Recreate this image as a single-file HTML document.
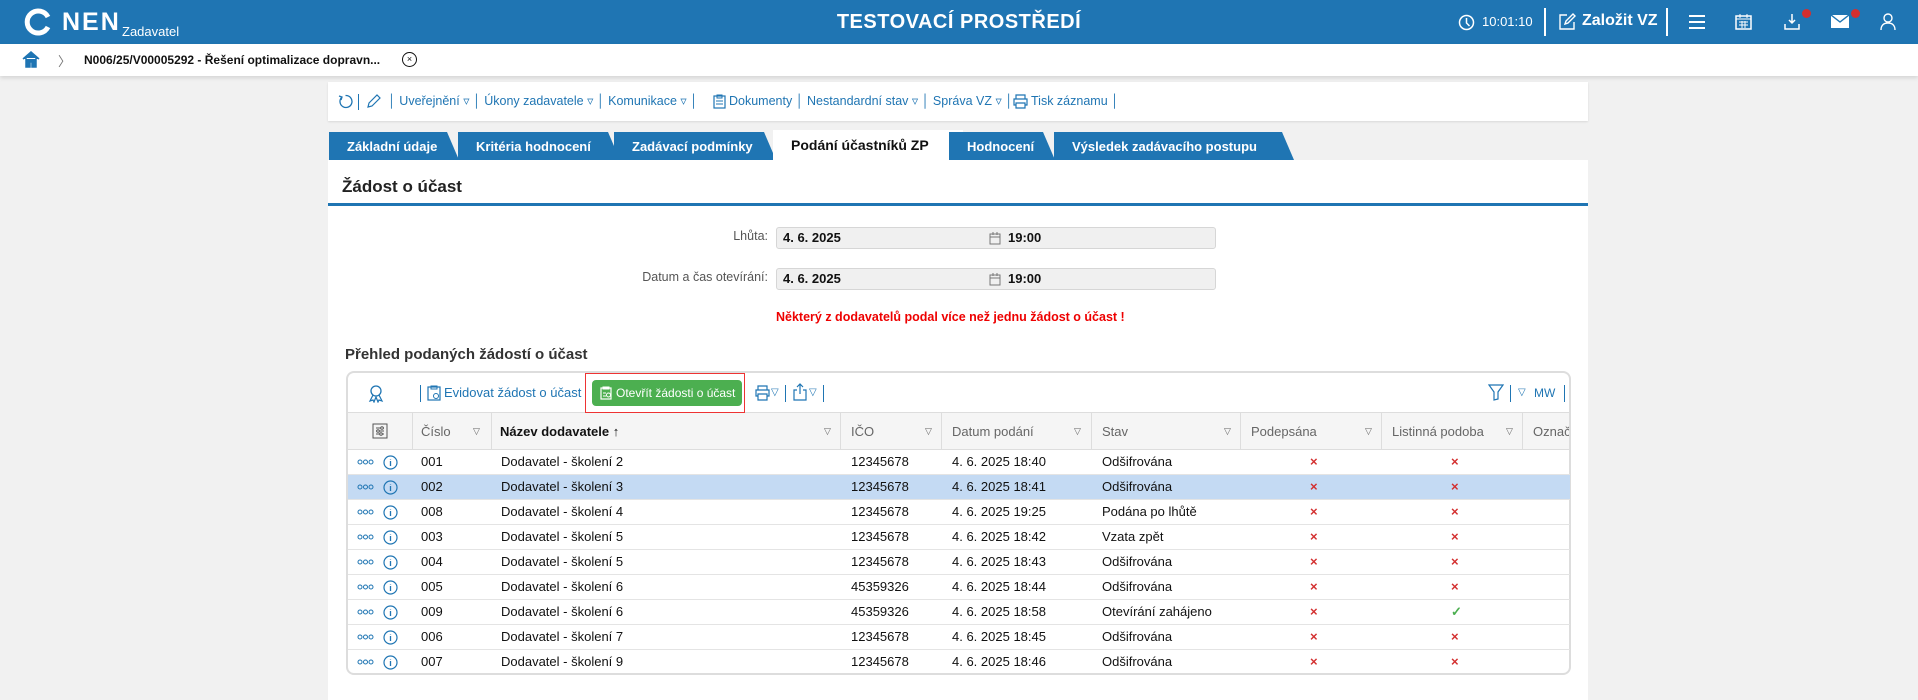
<!DOCTYPE html>
<html><head><meta charset="utf-8"><style>
*{box-sizing:border-box;margin:0;padding:0}
body{width:1918px;height:694px;overflow:hidden;background:#f1f1f1;font-family:"Liberation Sans",sans-serif;font-size:13px;color:#111;position:relative}
.a{position:absolute;white-space:nowrap}
.hdr{left:0;top:0;width:1918px;height:44px;background:#1f75b3;color:#fff}
.bc{left:0;top:44px;width:1918px;height:32px;background:#fff;box-shadow:0 2px 4px rgba(0,0,0,.12)}
.blue{color:#1f75b3}
.tab{top:132px;height:28px;background:#1f75b3;color:#fff;font-weight:bold;font-size:13px;line-height:30px;padding-left:18px;clip-path:polygon(0 0,calc(100% - 12px) 0,100% 100%,0 100%)}
.inp{height:22px;background:#f0f0f0;border:1px solid #d6d6d6;border-radius:3px;font-weight:bold;line-height:20px;padding-left:6px}
.row{left:347px;width:1222px;height:25px;border-bottom:1px solid #e4e4e4;line-height:24px}
.row span{position:absolute}
.x{color:#d32f2f;font-weight:bold}
.th{top:413px;height:37px;line-height:37px;color:#666;border-right:1px solid #ddd}
.cal{position:absolute;left:212px;top:4px}
.tb{color:#1f75b3;font-size:12.5px;top:0;line-height:39px}
.sep{position:absolute;width:1px;background:#1f75b3}
</style></head><body>
<div class="a hdr">
 <svg class="a" style="left:24px;top:8px" width="28" height="28" viewBox="0 0 28 28"><path d="M24 9A11 11 0 1 0 24 19" fill="none" stroke="#fff" stroke-width="5"/></svg>
 <div class="a" style="left:62px;top:8px;font-size:25px;font-weight:bold;letter-spacing:2px">NEN</div>
 <div class="a" style="left:122px;top:24px;font-size:13px">Zadavatel</div>
 <div class="a" style="left:0;width:1918px;text-align:center;top:11px;font-size:20px;font-weight:bold;letter-spacing:.5px">TESTOVACÍ PROSTŘEDÍ</div>
 <svg class="a" style="left:1458px;top:14px" width="17" height="17" viewBox="0 0 17 17"><circle cx="8.5" cy="8.5" r="7" fill="none" stroke="#fff" stroke-width="1.5"/><path d="M8.5 4v5l3 3" fill="none" stroke="#fff" stroke-width="1.5"/></svg>
 <div class="a" style="left:1482px;top:14px;font-size:13px">10:01:10</div>
 <div class="a" style="left:1544px;top:8px;width:2px;height:28px;background:#fff"></div>
 <svg class="a" style="left:1558px;top:13px" width="18" height="18" viewBox="0 0 18 18"><path d="M9 2H2v14h14V9M7 11l1-3 7-7 2 2-7 7z" fill="none" stroke="#fff" stroke-width="1.4"/></svg>
 <div class="a" style="left:1582px;top:12px;font-size:16px;font-weight:bold">Založit VZ</div>
 <div class="a" style="left:1666px;top:8px;width:2px;height:28px;background:#fff"></div>
 <div class="a" style="left:1689px;top:15px;width:16px;height:2px;background:#fff;box-shadow:0 6px 0 #fff,0 12px 0 #fff"></div>
 <svg class="a" style="left:1735px;top:13px" width="17" height="17" viewBox="0 0 17 17"><rect x="1" y="3" width="15" height="13" fill="none" stroke="#fff" stroke-width="1.5"/><path d="M1 6h15M5 1v4M12 1v4M4 9h9M4 12h9M7 8v7M10 8v7" stroke="#fff"/></svg>
 <svg class="a" style="left:1783px;top:13px" width="18" height="18" viewBox="0 0 18 18"><path d="M9 1v9M6 7l3 3 3-3M2 11v5h14v-5" fill="none" stroke="#fff" stroke-width="1.5"/></svg>
 <div class="a" style="left:1802px;top:9px;width:9px;height:9px;border-radius:5px;background:#d32f2f"></div>
 <svg class="a" style="left:1831px;top:15px" width="18" height="13" viewBox="0 0 18 13"><rect width="18" height="13" fill="#fff"/><path d="M0 0l9 7 9-7" fill="none" stroke="#1f75b3" stroke-width="1.4"/></svg>
 <div class="a" style="left:1851px;top:9px;width:9px;height:9px;border-radius:5px;background:#d32f2f"></div>
 <svg class="a" style="left:1880px;top:13px" width="16" height="18" viewBox="0 0 16 18"><circle cx="8" cy="5" r="4" fill="none" stroke="#fff" stroke-width="1.4"/><path d="M1 17c0-5 3-7 7-7s7 2 7 7" fill="none" stroke="#fff" stroke-width="1.4"/></svg>
</div>
<div class="a bc">
 <svg class="a" style="left:22px;top:7px" width="18" height="17" viewBox="0 0 18 17"><path d="M1 8L9 1l8 7M4 7v9h4v-5h2v5h4V7" fill="#1f75b3" stroke="#1f75b3" stroke-width="1.5"/></svg>
 <div class="a" style="left:58px;top:7px;color:#777">〉</div>
 <div class="a" style="left:84px;top:9px;font-weight:bold;font-size:12px">N006/25/V00005292 - Řešení optimalizace dopravn...</div>
 <div class="a" style="left:402px;top:8px;width:15px;height:15px;border:1.5px solid #111;border-radius:50%;font-size:9px;text-align:center;line-height:12px">×</div>
</div>
<div class="a" style="left:328px;top:82px;width:1260px;height:39px;background:#fff;box-shadow:0 1px 2px rgba(0,0,0,.1)">
 <svg class="a" style="left:10px;top:12px" width="15" height="15" viewBox="0 0 15 15"><path d="M4 3A6 6 0 1 0 7.5 1.5M1 2l3 1-1 3" fill="none" stroke="#1f75b3" stroke-width="1.3"/></svg>
 <div class="sep" style="left:30px;top:12px;height:16px"></div>
 <svg class="a" style="left:38px;top:12px" width="15" height="15" viewBox="0 0 15 15"><path d="M2 13l1-4 8-8 3 3-8 8z" fill="none" stroke="#1f75b3" stroke-width="1.2"/></svg>
 <span class="a tb" style="left:60px">│ Uveřejnění ▿ │ Úkony zadavatele ▿ │ Komunikace ▿ │</span>
 <svg class="a" style="left:385px;top:12px" width="13" height="15" viewBox="0 0 13 15"><rect x="1" y="2" width="11" height="12" fill="none" stroke="#1f75b3" stroke-width="1.2"/><path d="M4 1h5v3H4zM3 7h7M3 10h7" fill="none" stroke="#1f75b3"/></svg>
 <span class="a tb" style="left:401px">Dokumenty │ Nestandardní stav ▿ │ Správa VZ ▿ │</span>
 <svg class="a" style="left:685px;top:12px" width="15" height="15" viewBox="0 0 15 15"><path d="M3 5V1h9v4M3 11H1V5h13v6h-2M3 9h9v5H3z" fill="none" stroke="#1f75b3" stroke-width="1.2"/></svg>
 <span class="a tb" style="left:703px">Tisk záznamu │</span>
</div>
<div class="a tab" style="left:329px;width:130px">Základní údaje</div>
<div class="a tab" style="left:458px;width:162px">Kritéria hodnocení</div>
<div class="a tab" style="left:614px;width:162px;padding-left:18px">Zadávací podmínky</div>
<div class="a tab" style="left:773px;width:190px;background:#fff;color:#111;font-size:14px;clip-path:none;top:130px;height:30px">Podání účastníků ZP</div>
<div class="a tab" style="left:949px;width:106px">Hodnocení</div>
<div class="a tab" style="left:1054px;width:240px">Výsledek zadávacího postupu</div>
<div class="a" style="left:328px;top:160px;width:1260px;height:540px;background:#fff"></div>
<div class="a" style="left:342px;top:177px;font-size:17px;font-weight:bold;color:#222">Žádost o účast</div>
<div class="a" style="left:328px;top:203px;width:1260px;height:3px;background:#1f75b3"></div>
<div class="a" style="left:600px;width:168px;text-align:right;top:229px;color:#555;font-size:12.5px">Lhůta:</div>
<div class="a inp" style="left:776px;top:227px;width:440px">4. 6. 2025<svg class="cal" width="12" height="13" viewBox="0 0 12 13"><rect x="1" y="2" width="10" height="10" fill="none" stroke="#777"/><path d="M1 5h10M4 0v3M8 0v3" stroke="#777"/></svg><span class="a" style="left:231px">19:00</span></div>
<div class="a" style="left:600px;width:168px;text-align:right;top:270px;color:#555;font-size:12.5px">Datum a čas otevírání:</div>
<div class="a inp" style="left:776px;top:268px;width:440px">4. 6. 2025<svg class="cal" width="12" height="13" viewBox="0 0 12 13"><rect x="1" y="2" width="10" height="10" fill="none" stroke="#777"/><path d="M1 5h10M4 0v3M8 0v3" stroke="#777"/></svg><span class="a" style="left:231px">19:00</span></div>
<div class="a" style="left:776px;top:310px;color:#e00;font-weight:bold;font-size:12.5px">Některý z dodavatelů podal více než jednu žádost o účast !</div>
<div class="a" style="left:345px;top:346px;font-size:15px;font-weight:bold;color:#333">Přehled podaných žádostí o účast</div>
<div class="a" style="left:346px;top:371px;width:1225px;height:304px;border:2px solid #ddd;border-radius:8px;background:#fff;overflow:hidden">
 <div class="a" style="left:0;top:0;width:1225px;height:40px;border-bottom:1px solid #ddd;color:#1f75b3;font-size:13px;line-height:40px">
  <svg class="a" style="left:20px;top:12px" width="16" height="18" viewBox="0 0 16 18"><circle cx="8" cy="6" r="5" fill="none" stroke="#1f75b3" stroke-width="1.3"/><path d="M5 10l-3 6 3-1 1 2 2-5 2 5 1-2 3 1-3-6" fill="none" stroke="#1f75b3" stroke-width="1.2"/></svg>
  <div class="sep" style="left:72px;top:12px;height:17px"></div>
  <svg class="a" style="left:79px;top:12px" width="14" height="16" viewBox="0 0 14 16"><rect x="1" y="2" width="12" height="13" fill="none" stroke="#1f75b3" stroke-width="1.2"/><path d="M4 1h6v3H4z" fill="none" stroke="#1f75b3"/><circle cx="9" cy="11" r="2.5" fill="none" stroke="#1f75b3"/></svg>
  <span class="a" style="left:96px">Evidovat žádost o účast</span>
  <span class="a" style="left:244px;top:7px;height:26px;width:150px;background:#4caf50;color:#fff;border-radius:4px;line-height:26px;font-size:12px;padding-left:24px">Otevřít žádosti o účast</span>
  <svg class="a" style="left:252px;top:13px" width="12" height="14" viewBox="0 0 12 14"><rect x="1" y="2" width="10" height="11" fill="none" stroke="#fff" stroke-width="1.2"/><path d="M3 1h6v2H3zM3 7h3M3 10h3" stroke="#fff" fill="none"/><circle cx="8.5" cy="9" r="2" fill="none" stroke="#fff"/></svg>
  <span class="a" style="left:237px;top:0;width:160px;height:40px;border:1px solid #e33"></span>
  <svg class="a" style="left:407px;top:12px" width="15" height="16" viewBox="0 0 15 16"><path d="M3 5V1h9v4M3 11H1V5h13v6h-2M3 9h9v6H3z" fill="none" stroke="#1f75b3" stroke-width="1.2"/></svg>
  <span class="a" style="left:423px;font-size:10px">▽</span>
  <div class="sep" style="left:437px;top:12px;height:17px"></div>
  <svg class="a" style="left:445px;top:10px" width="14" height="18" viewBox="0 0 14 18"><path d="M7 1v10M4 4l3-3 3 3M4 7H1v10h12V7h-3" fill="none" stroke="#1f75b3" stroke-width="1.2"/></svg>
  <span class="a" style="left:461px;font-size:10px">▽</span>
  <div class="sep" style="left:475px;top:12px;height:17px"></div>
  <svg class="a" style="left:1140px;top:11px" width="16" height="17" viewBox="0 0 16 17"><path d="M1 1h14l-5 7v7l-4 1V8z" fill="none" stroke="#1f75b3" stroke-width="1.2"/></svg>
  <div class="sep" style="left:1162px;top:12px;height:17px"></div>
  <span class="a" style="left:1170px;font-size:10px">▽</span><span class="a" style="left:1186px;font-size:12px">MW</span>
  <div class="sep" style="left:1216px;top:12px;height:17px"></div>
 </div>
 <div class="a" style="left:0;top:40px;width:1225px;height:37px;background:#f5f5f5;border-bottom:1px solid #ddd"></div>
</div>
<svg class="a" style="left:372px;top:423px" width="16" height="16" viewBox="0 0 16 16"><rect x="1" y="1" width="14" height="14" fill="none" stroke="#555"/><path d="M4 5h8M4 8h8M4 11h8" stroke="#555"/><circle cx="10" cy="5" r="1.3" fill="#fff" stroke="#555"/><circle cx="6" cy="8" r="1.3" fill="#fff" stroke="#555"/><circle cx="9" cy="11" r="1.3" fill="#fff" stroke="#555"/></svg>
<div class="a th" style="left:348px;width:65px"></div>
<div class="a th" style="left:413px;width:79px;padding-left:8px">Číslo<span class="a" style="left:60px;font-size:9px">▽</span></div>
<div class="a th" style="left:492px;width:349px;padding-left:8px;color:#111;font-weight:bold">Název dodavatele ↑<span class="a" style="left:332px;font-size:9px;font-weight:normal;color:#666">▽</span></div>
<div class="a th" style="left:841px;width:101px;padding-left:10px">IČO<span class="a" style="left:84px;font-size:9px">▽</span></div>
<div class="a th" style="left:942px;width:150px;padding-left:10px">Datum podání<span class="a" style="left:132px;font-size:9px">▽</span></div>
<div class="a th" style="left:1092px;width:149px;padding-left:10px">Stav<span class="a" style="left:132px;font-size:9px">▽</span></div>
<div class="a th" style="left:1241px;width:141px;padding-left:10px">Podepsána<span class="a" style="left:124px;font-size:9px">▽</span></div>
<div class="a th" style="left:1382px;width:141px;padding-left:10px">Listinná podoba<span class="a" style="left:124px;font-size:9px">▽</span></div>
<div class="a th" style="left:1523px;width:46px;padding-left:10px;border:0;overflow:hidden">Označ</div>
<div class="a" style="left:348px;top:450px">
<div class="a row" style="left:0;top:0"><span style="left:9px;top:9px;line-height:0"><svg width="17" height="6" viewBox="0 0 17 6"><circle cx="3" cy="3" r="2" fill="none" stroke="#1f75b3"/><circle cx="8.5" cy="3" r="2" fill="none" stroke="#1f75b3"/><circle cx="14" cy="3" r="2" fill="none" stroke="#1f75b3"/></svg></span><span style="left:35px;top:5px;line-height:0"><svg width="15" height="15" viewBox="0 0 15 15"><circle cx="7.5" cy="7.5" r="6.5" fill="none" stroke="#1f75b3" stroke-width="1.2"/><path d="M7.5 6v5M7.5 4v.5" stroke="#1f75b3" stroke-width="1.3"/></svg></span><span style="left:73px">001</span><span style="left:153px">Dodavatel - školení 2</span><span style="left:503px">12345678</span><span style="left:604px">4. 6. 2025 18:40</span><span style="left:754px">Odšifrována</span><span class="x" style="left:962px">×</span><span class="x" style="left:1103px">×</span></div>
<div class="a row" style="left:0;top:25px;background:#c4daf3"><span style="left:9px;top:9px;line-height:0"><svg width="17" height="6" viewBox="0 0 17 6"><circle cx="3" cy="3" r="2" fill="none" stroke="#1f75b3"/><circle cx="8.5" cy="3" r="2" fill="none" stroke="#1f75b3"/><circle cx="14" cy="3" r="2" fill="none" stroke="#1f75b3"/></svg></span><span style="left:35px;top:5px;line-height:0"><svg width="15" height="15" viewBox="0 0 15 15"><circle cx="7.5" cy="7.5" r="6.5" fill="none" stroke="#1f75b3" stroke-width="1.2"/><path d="M7.5 6v5M7.5 4v.5" stroke="#1f75b3" stroke-width="1.3"/></svg></span><span style="left:73px">002</span><span style="left:153px">Dodavatel - školení 3</span><span style="left:503px">12345678</span><span style="left:604px">4. 6. 2025 18:41</span><span style="left:754px">Odšifrována</span><span class="x" style="left:962px">×</span><span class="x" style="left:1103px">×</span></div>
<div class="a row" style="left:0;top:50px"><span style="left:9px;top:9px;line-height:0"><svg width="17" height="6" viewBox="0 0 17 6"><circle cx="3" cy="3" r="2" fill="none" stroke="#1f75b3"/><circle cx="8.5" cy="3" r="2" fill="none" stroke="#1f75b3"/><circle cx="14" cy="3" r="2" fill="none" stroke="#1f75b3"/></svg></span><span style="left:35px;top:5px;line-height:0"><svg width="15" height="15" viewBox="0 0 15 15"><circle cx="7.5" cy="7.5" r="6.5" fill="none" stroke="#1f75b3" stroke-width="1.2"/><path d="M7.5 6v5M7.5 4v.5" stroke="#1f75b3" stroke-width="1.3"/></svg></span><span style="left:73px">008</span><span style="left:153px">Dodavatel - školení 4</span><span style="left:503px">12345678</span><span style="left:604px">4. 6. 2025 19:25</span><span style="left:754px">Podána po lhůtě</span><span class="x" style="left:962px">×</span><span class="x" style="left:1103px">×</span></div>
<div class="a row" style="left:0;top:75px"><span style="left:9px;top:9px;line-height:0"><svg width="17" height="6" viewBox="0 0 17 6"><circle cx="3" cy="3" r="2" fill="none" stroke="#1f75b3"/><circle cx="8.5" cy="3" r="2" fill="none" stroke="#1f75b3"/><circle cx="14" cy="3" r="2" fill="none" stroke="#1f75b3"/></svg></span><span style="left:35px;top:5px;line-height:0"><svg width="15" height="15" viewBox="0 0 15 15"><circle cx="7.5" cy="7.5" r="6.5" fill="none" stroke="#1f75b3" stroke-width="1.2"/><path d="M7.5 6v5M7.5 4v.5" stroke="#1f75b3" stroke-width="1.3"/></svg></span><span style="left:73px">003</span><span style="left:153px">Dodavatel - školení 5</span><span style="left:503px">12345678</span><span style="left:604px">4. 6. 2025 18:42</span><span style="left:754px">Vzata zpět</span><span class="x" style="left:962px">×</span><span class="x" style="left:1103px">×</span></div>
<div class="a row" style="left:0;top:100px"><span style="left:9px;top:9px;line-height:0"><svg width="17" height="6" viewBox="0 0 17 6"><circle cx="3" cy="3" r="2" fill="none" stroke="#1f75b3"/><circle cx="8.5" cy="3" r="2" fill="none" stroke="#1f75b3"/><circle cx="14" cy="3" r="2" fill="none" stroke="#1f75b3"/></svg></span><span style="left:35px;top:5px;line-height:0"><svg width="15" height="15" viewBox="0 0 15 15"><circle cx="7.5" cy="7.5" r="6.5" fill="none" stroke="#1f75b3" stroke-width="1.2"/><path d="M7.5 6v5M7.5 4v.5" stroke="#1f75b3" stroke-width="1.3"/></svg></span><span style="left:73px">004</span><span style="left:153px">Dodavatel - školení 5</span><span style="left:503px">12345678</span><span style="left:604px">4. 6. 2025 18:43</span><span style="left:754px">Odšifrována</span><span class="x" style="left:962px">×</span><span class="x" style="left:1103px">×</span></div>
<div class="a row" style="left:0;top:125px"><span style="left:9px;top:9px;line-height:0"><svg width="17" height="6" viewBox="0 0 17 6"><circle cx="3" cy="3" r="2" fill="none" stroke="#1f75b3"/><circle cx="8.5" cy="3" r="2" fill="none" stroke="#1f75b3"/><circle cx="14" cy="3" r="2" fill="none" stroke="#1f75b3"/></svg></span><span style="left:35px;top:5px;line-height:0"><svg width="15" height="15" viewBox="0 0 15 15"><circle cx="7.5" cy="7.5" r="6.5" fill="none" stroke="#1f75b3" stroke-width="1.2"/><path d="M7.5 6v5M7.5 4v.5" stroke="#1f75b3" stroke-width="1.3"/></svg></span><span style="left:73px">005</span><span style="left:153px">Dodavatel - školení 6</span><span style="left:503px">45359326</span><span style="left:604px">4. 6. 2025 18:44</span><span style="left:754px">Odšifrována</span><span class="x" style="left:962px">×</span><span class="x" style="left:1103px">×</span></div>
<div class="a row" style="left:0;top:150px"><span style="left:9px;top:9px;line-height:0"><svg width="17" height="6" viewBox="0 0 17 6"><circle cx="3" cy="3" r="2" fill="none" stroke="#1f75b3"/><circle cx="8.5" cy="3" r="2" fill="none" stroke="#1f75b3"/><circle cx="14" cy="3" r="2" fill="none" stroke="#1f75b3"/></svg></span><span style="left:35px;top:5px;line-height:0"><svg width="15" height="15" viewBox="0 0 15 15"><circle cx="7.5" cy="7.5" r="6.5" fill="none" stroke="#1f75b3" stroke-width="1.2"/><path d="M7.5 6v5M7.5 4v.5" stroke="#1f75b3" stroke-width="1.3"/></svg></span><span style="left:73px">009</span><span style="left:153px">Dodavatel - školení 6</span><span style="left:503px">45359326</span><span style="left:604px">4. 6. 2025 18:58</span><span style="left:754px">Otevírání zahájeno</span><span class="x" style="left:962px">×</span><span style="left:1103px;color:#4caf50;font-weight:bold">✓</span></div>
<div class="a row" style="left:0;top:175px"><span style="left:9px;top:9px;line-height:0"><svg width="17" height="6" viewBox="0 0 17 6"><circle cx="3" cy="3" r="2" fill="none" stroke="#1f75b3"/><circle cx="8.5" cy="3" r="2" fill="none" stroke="#1f75b3"/><circle cx="14" cy="3" r="2" fill="none" stroke="#1f75b3"/></svg></span><span style="left:35px;top:5px;line-height:0"><svg width="15" height="15" viewBox="0 0 15 15"><circle cx="7.5" cy="7.5" r="6.5" fill="none" stroke="#1f75b3" stroke-width="1.2"/><path d="M7.5 6v5M7.5 4v.5" stroke="#1f75b3" stroke-width="1.3"/></svg></span><span style="left:73px">006</span><span style="left:153px">Dodavatel - školení 7</span><span style="left:503px">12345678</span><span style="left:604px">4. 6. 2025 18:45</span><span style="left:754px">Odšifrována</span><span class="x" style="left:962px">×</span><span class="x" style="left:1103px">×</span></div>
<div class="a row" style="left:0;top:200px;border:0"><span style="left:9px;top:9px;line-height:0"><svg width="17" height="6" viewBox="0 0 17 6"><circle cx="3" cy="3" r="2" fill="none" stroke="#1f75b3"/><circle cx="8.5" cy="3" r="2" fill="none" stroke="#1f75b3"/><circle cx="14" cy="3" r="2" fill="none" stroke="#1f75b3"/></svg></span><span style="left:35px;top:5px;line-height:0"><svg width="15" height="15" viewBox="0 0 15 15"><circle cx="7.5" cy="7.5" r="6.5" fill="none" stroke="#1f75b3" stroke-width="1.2"/><path d="M7.5 6v5M7.5 4v.5" stroke="#1f75b3" stroke-width="1.3"/></svg></span><span style="left:73px">007</span><span style="left:153px">Dodavatel - školení 9</span><span style="left:503px">12345678</span><span style="left:604px">4. 6. 2025 18:46</span><span style="left:754px">Odšifrována</span><span class="x" style="left:962px">×</span><span class="x" style="left:1103px">×</span></div>
</div>
</body></html>
